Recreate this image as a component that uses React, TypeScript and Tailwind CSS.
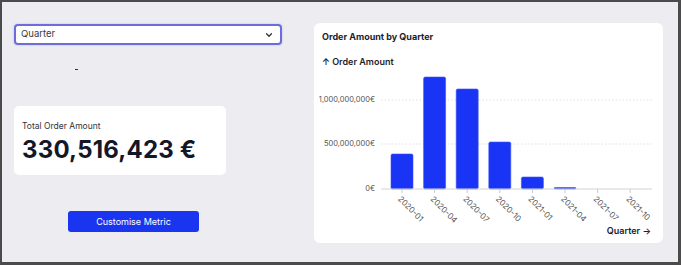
import React from "react";
import { ChevronDown } from "lucide-react";

const bars = [
  { label: "2020-01", v: 389 },
  { label: "2020-04", v: 1244 },
  { label: "2020-07", v: 1111 },
  { label: "2020-10", v: 522 },
  { label: "2021-01", v: 133 },
  { label: "2021-04", v: 17 },
  { label: "2021-07", v: 0 },
  { label: "2021-10", v: 0 },
];

function Chart() {
  const base = 121;
  const scale = 45 / 500;
  const x0 = 88;
  const step = 32.6;
  const bw = 22;
  return (
    <svg width={349} height={152} viewBox="0 0 349 152" className="block" overflow="visible">
      <line x1={67} x2={338} y1={32} y2={32} stroke="#d9d9de" strokeWidth={0.8} strokeDasharray="1.5 2" />
      <line x1={67} x2={338} y1={76} y2={76} stroke="#d9d9de" strokeWidth={0.8} strokeDasharray="1.5 2" />
      <text x={61} y={32} textAnchor="end" dominantBaseline="middle" fontSize={7.5} fill="#555" fontFamily="Inter, sans-serif">1,000,000,000€</text>
      <text x={61} y={76} textAnchor="end" dominantBaseline="middle" fontSize={7.5} fill="#555" fontFamily="Inter, sans-serif">500,000,000€</text>
      <text x={61} y={121} textAnchor="end" dominantBaseline="middle" fontSize={7.5} fill="#555" fontFamily="Inter, sans-serif">0€</text>
      {bars.map((b, i) => {
        const cx = x0 + i * step;
        const h = b.v * scale;
        return (
          <g key={b.label}>
            {h > 0 && (
              <rect x={cx - bw / 2} y={base - h} width={bw} height={h} rx={1.5} fill="#1a34f5" stroke="#3a52f7" strokeWidth={0.6} />
            )}
            <line x1={cx} x2={cx} y1={base} y2={base + 4} stroke="#bbb" strokeWidth={0.8} />
            <text
              x={cx - 3}
              y={base + 9}
              transform={`rotate(45 ${cx - 3} ${base + 9})`}
              fontSize={8}
              fill="#555"
              fontFamily="Inter, sans-serif"
              dominantBaseline="middle"
            >
              {b.label}
            </text>
          </g>
        );
      })}
      <line x1={67} x2={338} y1={base} y2={base} stroke="#d4d4d8" strokeWidth={1.2} />
    </svg>
  );
}

export default function App() {
  return (
    <div
      className="w-[681px] h-[265px] box-border overflow-hidden bg-[#ececf1] border-l-2 border-t-2 border-r-[3px] border-b-[3px] border-[#4b4b4b] flex"
      style={{ fontFamily: "Inter, 'Noto Sans', sans-serif" }}
    >
      <div className="ml-[12px] mt-[22px] w-[268px] flex flex-col">
        <div className="h-[21px] w-[268px] box-border bg-white border-2 border-[#6d6dd9] rounded-[4px] flex items-center justify-between pl-[5px] pr-[6px] shadow-[0_0_2px_rgba(99,102,241,0.4)]">
          <span className="text-[9.5px] text-[#3a3a3a]">Quarter</span>
          <ChevronDown size={10} strokeWidth={3} color="#333" />
        </div>
        <div className="ml-[61px] mt-[22px] h-[4px] flex items-center">
          <div className="w-[3px] h-[1px] bg-[#333]" />
        </div>
        <div className="mt-[35px] w-[212px] h-[69px] bg-white rounded-[5px] pl-[8px] pt-[15px] box-border">
          <div className="text-[8.5px] leading-[10px] text-[#333]">Total Order Amount</div>
          <div className="mt-[5px] text-[24px] leading-[27px] font-bold text-[#141728] tracking-[0.2px]">330,516,423 €</div>
        </div>
        <button className="mt-[36px] ml-[54px] w-[131px] h-[21px] bg-[#1a35f0] rounded-[3px] text-white text-[9px] flex items-center justify-center">
          Customise Metric
        </button>
      </div>
      <div className="ml-[32px] mt-[21px] w-[349px] h-[220px] bg-white rounded-[6px] flex flex-col">
        <div className="px-[8px] pt-[8px] text-[9px] leading-[12px] font-bold text-[#1d1d2b]">Order Amount by Quarter</div>
        <div className="px-[8px] mt-[13px] text-[9px] leading-[12px] font-semibold text-[#1d1d2b]">↑ Order Amount</div>
        <Chart />
        <div className="flex justify-end pr-[12px] mt-[5px] text-[9px] leading-[12px] font-semibold text-[#1d1d2b]">Quarter →</div>
      </div>
    </div>
  );
}
